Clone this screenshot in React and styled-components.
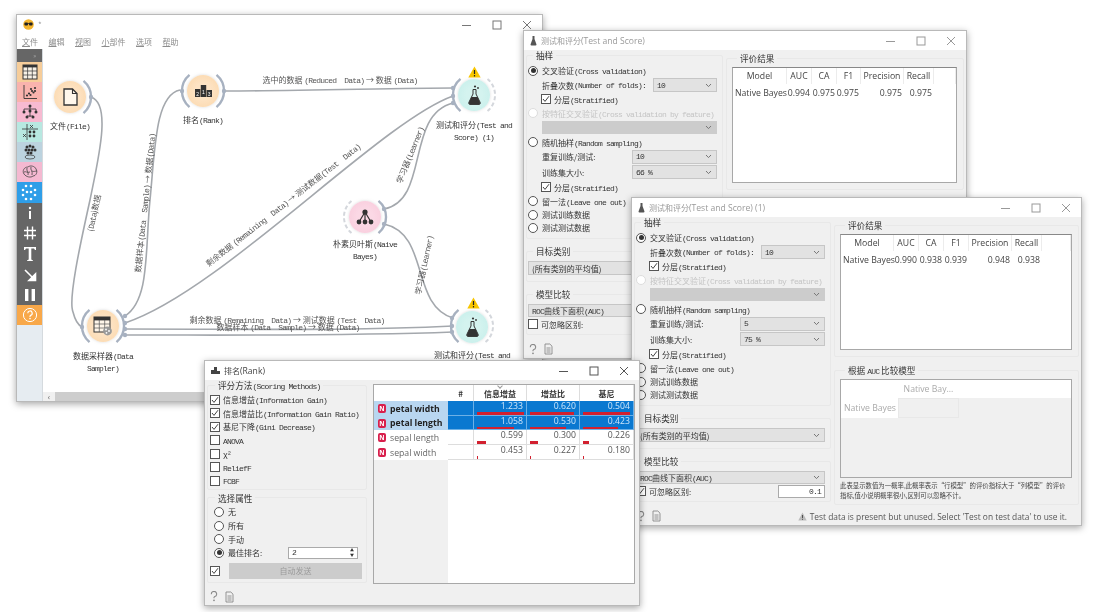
import React from 'react'
import styled, { createGlobalStyle } from 'styled-components'

const CJK = '"Noto Sans CJK SC", "Liberation Sans", sans-serif'
const SANS = '"Open Sans", "Noto Sans CJK SC", sans-serif'

const GlobalStyle = createGlobalStyle`
  html, body { margin: 0; padding: 0; background: #fff; }
  body { font-family: ${CJK}; font-size: 8px; color: #333; }
`

const Desktop = styled.div`
  position: relative;
  width: 1101px;
  height: 612px;
  overflow: hidden;
  background: #fff;
  filter: blur(0.4px);
`

const Win = styled.div`
  position: absolute;
  left: ${p => p.$x}px;
  top: ${p => p.$y}px;
  width: ${p => p.$w}px;
  height: ${p => p.$h}px;
  box-sizing: border-box;
  display: flex;
  flex-direction: column;
  background: ${p => p.$bg || '#f0f0f0'};
  border: 1px solid #b9b9b9;
  box-shadow: 0 2px 7px rgba(0, 0, 0, 0.35);
`

const TitleBar = styled.div`
  flex: 0 0 19px;
  display: flex;
  align-items: center;
  padding-left: 6px;
  background: #fff;
  color: ${p => p.$color || '#9a9a9a'};
  font-size: 8px;
`

const TitleText = styled.span`
  margin-left: 4px;
  white-space: nowrap;
`

const TitleLatin = styled.span`
  font-family: ${SANS};
  font-size: 8.6px;
`

const WinButtons = styled.div`
  margin-left: auto;
  display: flex;
`

const WinButton = styled.div`
  width: 30px;
  height: 19px;
  display: flex;
  align-items: center;
  justify-content: center;
  svg { display: block; }
`

// simsun style half width latin
const L = styled.span`
  font-family: "Liberation Mono", monospace;
  font-size: 8px;
  letter-spacing: -0.8px;
`

const Row = styled.div`
  height: ${p => p.$h || 14}px;
  margin-top: ${p => p.$top || 0}px;
  display: flex;
  align-items: center;
  padding-left: ${p => p.$indent || 0}px;
  white-space: nowrap;
  color: ${p => (p.$muted ? '#c4c4c4' : '#333')};
`

const Box = styled.span`
  flex: 0 0 10px;
  box-sizing: border-box;
  width: 10px;
  height: 10px;
  margin-right: ${p => p.$gap || 3}px;
  background: #fff;
  border: 1px solid ${p => (p.$muted ? '#ddd' : '#555')};
  border-radius: ${p => (p.$round ? '50%' : '0')};
  display: flex;
  align-items: center;
  justify-content: center;
`

const Dot = styled.span`
  width: 5px;
  height: 5px;
  border-radius: 50%;
  background: ${p => (p.$muted ? '#ccc' : '#333')};
`

const Radio = ({ on, muted, children }) => (
  <>
    <Box $round $gap={4} $muted={muted}>{on && <Dot $muted={muted} />}</Box>
    <span>{children}</span>
  </>
)

const Check = ({ on, children }) => (
  <>
    <Box>
      {on && (
        <svg width="8" height="8" viewBox="0 0 8 8">
          <path d="M1 4 L3 6.4 L7 1.2" fill="none" stroke="#444" strokeWidth="1" />
        </svg>
      )}
    </Box>
    <span>{children}</span>
  </>
)

const Combo = styled.div`
  box-sizing: border-box;
  flex: ${p => (p.$w ? `0 0 ${p.$w}px` : '1')};
  margin-left: ${p => (p.$w ? 'auto' : '0')};
  height: ${p => p.$h || 14}px;
  padding: 0 4px 0 3px;
  display: flex;
  align-items: center;
  justify-content: space-between;
  background: ${p => (p.$off ? '#cccccc' : '#e2e2e2')};
  border: 1px solid ${p => (p.$off ? '#cccccc' : '#c6c6c6')};
`

const Chevron = () => (
  <svg width="7" height="5" viewBox="0 0 7 5">
    <path d="M1 1 L3.5 3.6 L6 1" fill="none" stroke="#777" strokeWidth="1" />
  </svg>
)

const Group = styled.fieldset`
  margin: ${p => p.$top || 0}px 0 0 0;
  padding: ${p => p.$pad || '3px 5px 4px 1px'};
  min-width: 0;
  border: 1px solid #e8e8e8;
  border-radius: 2px;
`

const Legend = styled.legend`
  padding: 0 3px;
  margin-left: 5px;
  height: 10px;
  line-height: 10px;
  color: #333;
  font-size: ${p => p.$size || 8.6}px;
  white-space: nowrap;
`

const Body = styled.div`
  flex: 1;
  min-height: 0;
  display: flex;
  gap: 3px;
  padding: 0 2px;
`

const LeftPanel = styled.div`
  flex: 0 0 ${p => p.$w || 197}px;
  display: flex;
  flex-direction: column;
`

const RightPanel = styled.div`
  flex: 1;
  min-width: 0;
  padding-top: 3px;
  display: flex;
  flex-direction: column;
`

const StatusBar = styled.div`
  flex: 0 0 ${p => p.$h || 18}px;
  display: flex;
  align-items: center;
  gap: 7px;
  padding: 0 5px;
  color: #555;
  font-family: ${SANS};
  font-size: 8.4px;
  white-space: nowrap;
`

const StatusText = styled.span`
  margin-left: auto;
  display: flex;
  align-items: center;
  gap: 3px;
  margin-right: 9px;
`

const ScoreTable = styled.div`
  box-sizing: border-box;
  height: ${p => p.$h}px;
  background: #fff;
  border: 1px solid #a8a8a8;
  border-top-color: #888;
  display: grid;
  grid-template-columns: ${p => p.$cols};
  grid-template-rows: 16px 17px;
  align-content: start;
  font-family: ${SANS};
  font-size: 8.7px;
  color: #444;
`

const ScoreHead = styled.div`
  display: flex;
  align-items: center;
  justify-content: center;
  border-right: 1px solid #ececec;
  white-space: nowrap;
`

const ScoreCell = styled.div`
  display: flex;
  align-items: center;
  justify-content: ${p => (p.$name ? 'flex-start' : 'flex-end')};
  padding: ${p => (p.$name ? '0 0 0 2px' : '0 2px 0 0')};
  white-space: nowrap;
`

const CompareTable = styled.div`
  box-sizing: border-box;
  height: 99px;
  display: grid;
  grid-template-columns: 57px 61px 1fr;
  grid-template-rows: 18px 20px 1fr;
  background: #f0f0f0;
  border: 1px solid #a8a8a8;
  color: #aaa;
  font-family: ${SANS};
  font-size: 8.7px;
`

const CompareCell = styled.div`
  display: flex;
  align-items: center;
  justify-content: ${p => (p.$center ? 'center' : 'flex-start')};
  padding-left: ${p => (p.$center ? 0 : 3)}px;
  background: ${p => (p.$white ? '#fff' : '#f0f0f0')};
  border: ${p => (p.$framed ? '1px solid #e8e8e8' : 'none')};
  white-space: nowrap;
`

const Caption = styled.div`
  margin-top: 3px;
  font-size: 6.4px;
  line-height: 10px;
  color: #444;
  white-space: nowrap;
`

const Spin = styled.div`
  box-sizing: border-box;
  flex: 0 0 ${p => p.$w}px;
  margin-left: auto;
  margin-right: ${p => p.$mr || 0}px;
  height: ${p => p.$h || 13}px;
  padding: 0 3px;
  background: #fff;
  border: 1px solid #aaa;
  display: flex;
  align-items: center;
  justify-content: ${p => (p.$right ? 'flex-end' : 'space-between')};
`

const HelpIcon = () => (
  <svg width="8" height="11" viewBox="0 0 9 12">
    <path d="M1.5 3.5 A3 3 0 1 1 5 6.2 L4.5 7 V8" fill="none" stroke="#888" strokeWidth="1.2" />
    <circle cx="4.5" cy="10.3" r="1" fill="#888" />
  </svg>
)

const DocIcon = () => (
  <svg width="9" height="12" viewBox="0 0 9 12">
    <path d="M1 1 H5.8 L8 3.2 V11 H1 Z M2.5 5 H6.5 M2.5 7 H6.5 M2.5 9 H6.5" fill="none" stroke="#888" strokeWidth="0.9" />
  </svg>
)

const FlaskSmall = () => (
  <svg width="7" height="11" viewBox="0 0 7 11">
    <path d="M2.5 1 H4.5 V4 L6.5 9.5 Q6.5 10.5 5.5 10.5 H1.5 Q0.5 10.5 0.5 9.5 L2.5 4 Z" fill="#555" />
  </svg>
)

const MinIcon = ({ c }) => (
  <svg width="10" height="10" viewBox="0 0 10 10"><path d="M0 5.5 H9" stroke={c} /></svg>
)
const MaxIcon = ({ c }) => (
  <svg width="10" height="10" viewBox="0 0 10 10"><rect x="1" y="1" width="8" height="8" fill="none" stroke={c} /></svg>
)
const CloseIcon = ({ c }) => (
  <svg width="10" height="10" viewBox="0 0 10 10"><path d="M1 1 L9 9 M9 1 L1 9" stroke={c} /></svg>
)

const Controls = ({ c = '#999' }) => (
  <WinButtons>
    <WinButton><MinIcon c={c} /></WinButton>
    <WinButton><MaxIcon c={c} /></WinButton>
    <WinButton><CloseIcon c={c} /></WinButton>
  </WinButtons>
)

const HEAD = ['Model', 'AUC', 'CA', 'F1', 'Precision', 'Recall', '']

const TestScore = ({ x, y, w, title, folds, repeat, train, scores, cols, ignoreOn, compare, status }) => (
  <Win $x={x} $y={y} $w={w} $h={329}>
    <TitleBar>
      <FlaskSmall />
      <TitleText>测试和评分<TitleLatin>{title}</TitleLatin></TitleText>
      <Controls />
    </TitleBar>
    <Body>
      <LeftPanel>
        <Group>
          <Legend>抽样</Legend>
          <Row $h={15}><Radio on>交叉验证<L>(Cross validation)</L></Radio></Row>
          <Row $indent={14}>折叠次数<L>(Number of folds):</L><Combo $w={64}>{folds}<Chevron /></Combo></Row>
          <Row $indent={13}><Check on>分层<L>(Stratified)</L></Check></Row>
          <Row $muted><Radio muted>按特征交叉验证<L>(Cross validation by feature)</L></Radio></Row>
          <Row $h={15} $indent={14}><Combo $off $h={13}><span /><Chevron /></Combo></Row>
          <Row><Radio>随机抽样<L>(Random sampling)</L></Radio></Row>
          <Row $h={15} $indent={14}>重复训练/测试:<Combo $w={85}><L>{repeat}</L><Chevron /></Combo></Row>
          <Row $h={16} $indent={14}>训练集大小:<Combo $w={85}><L>{train}</L><Chevron /></Combo></Row>
          <Row $indent={13}><Check on>分层<L>(Stratified)</L></Check></Row>
          <Row><Radio>留一法<L>(Leave one out)</L></Radio></Row>
          <Row $h={13}><Radio>测试训练数据</Radio></Row>
          <Row $h={13}><Radio>测试测试数据</Radio></Row>
        </Group>
        <Group $top={7} $pad="5px 5px 6px 1px">
          <Legend>目标类别</Legend>
          <Row><Combo>(所有类别的平均值)<Chevron /></Combo></Row>
        </Group>
        <Group $top={7} $pad="4px 5px 3px 1px">
          <Legend>模型比较</Legend>
          <Row><Combo $h={13}><span><L>ROC</L>曲线下面积<L>(AUC)</L></span><Chevron /></Combo></Row>
          <Row>
            <Check on={ignoreOn}>可忽略区别:</Check>
            {ignoreOn && <Spin $w={47} $right><L>0.1</L></Spin>}
          </Row>
        </Group>
      </LeftPanel>
      <RightPanel>
        <Group $pad="4px 6px 6px 5px">
          <Legend>评价结果</Legend>
          <ScoreTable $h={116} $cols={cols}>
            {HEAD.map(h => <ScoreHead key={h}>{h}</ScoreHead>)}
            <ScoreCell $name>Native Bayes</ScoreCell>
            {scores.map((s, i) => <ScoreCell key={i}>{s}</ScoreCell>)}
          </ScoreTable>
        </Group>
        {compare && (
          <Group $top={8} $pad="4px 6px 3px 5px">
            <Legend>根据 <L>AUC</L> 比较模型</Legend>
            <CompareTable>
              <CompareCell $white />
              <CompareCell $white $center>Native Bay...</CompareCell>
              <CompareCell $white />
              <CompareCell $white>Native Bayes</CompareCell>
              <CompareCell $framed />
            </CompareTable>
            <Caption>
              此表显示数值为一概率,此概率表示“行模型”的评价指标大于“列模型”的评价<br />
              指标,值小说明概率很小,区别可以忽略不计。
            </Caption>
          </Group>
        )}
      </RightPanel>
    </Body>
    <StatusBar>
      <HelpIcon />
      <DocIcon />
      {status && (
        <StatusText>
          <svg width="9" height="9" viewBox="0 0 9 9">
            <path d="M4.5 0.5 L8.7 8.5 H0.3 Z" fill="#bbb" />
            <path d="M4.5 3 V6 M4.5 6.8 V7.8" stroke="#444" strokeWidth="0.9" />
          </svg>
          {status}
        </StatusText>
      )}
    </StatusBar>
  </Win>
)

/* ---- main canvas window ---- */

const MenuBar = styled.div`
  flex: 0 0 15px;
  display: flex;
  align-items: center;
  gap: 10.5px;
  padding-left: 5px;
  background: #fff;
  color: #8d8d8d;
`

const MenuItem = styled.span`
  display: inline-block;
  &::first-letter { text-decoration: underline; }
`

const Main = styled.div`
  flex: 1;
  min-height: 0;
  display: flex;
  background: #fff;
`

const ToolBar = styled.div`
  flex: 0 0 25px;
  display: flex;
  flex-direction: column;
  background: #e6ecf1;
  border-right: 1px solid #d5dade;
`

const Tool = styled.div`
  flex: 0 0 ${p => p.$h || 20}px;
  position: relative;
  display: flex;
  align-items: center;
  justify-content: ${p => (p.$end ? 'flex-end' : 'center')};
  padding-right: ${p => (p.$end ? 6 : 0)}px;
  background: ${p => p.$bg};
  color: #aaa;
  font-size: 6px;
`

const CanvasColumn = styled.div`
  flex: 1;
  min-width: 0;
  display: flex;
  flex-direction: column;
`

const Canvas = styled.div`
  position: relative;
  flex: 1;
  overflow: hidden;
`

const Links = styled.svg`
  position: absolute;
  inset: 0;
`

const ScrollBar = styled.div`
  flex: 0 0 9px;
  display: flex;
  align-items: center;
  background: #f0f0f0;
  color: #555;
  font-size: 8px;
`

const ScrollArrow = styled.span`
  flex: 0 0 12px;
  text-align: center;
  line-height: 9px;
`

const ScrollThumb = styled.div`
  flex: 1;
  height: 9px;
  background: #cdcdcd;
`

const WidgetNode = styled.div`
  position: absolute;
  left: ${p => p.$x - 43 - 60}px;
  top: ${p => p.$y - 49 - 16}px;
  width: 120px;
  display: flex;
  flex-direction: column;
  align-items: center;
`

const Disc = styled.div`
  width: 32px;
  height: 32px;
  border-radius: 50%;
  background: radial-gradient(circle, ${p => p.$light} 35%, ${p => p.$tone} 100%);
  box-shadow: 0 0 3px rgba(180, 180, 180, 0.5);
  display: flex;
  align-items: center;
  justify-content: center;
`

const NodeLabel = styled.div`
  margin-top: ${p => p.$gap}px;
  line-height: 11px;
  text-align: center;
  white-space: nowrap;
  color: #333;
`

const LinkLabel = styled.div`
  position: absolute;
  left: ${p => p.$x - 43}px;
  top: ${p => p.$y - 49}px;
  transform: translate(-50%, -50%) rotate(${p => p.$r || 0}deg);
  white-space: pre;
  color: #555;
  line-height: 7px;
`

const Warn = () => (
  <svg width="13" height="12" viewBox="0 0 13 12">
    <path d="M6.5 0.5 L12.7 11.5 H0.3 Z" fill="#f8c600" />
    <path d="M6.5 4 V8 M6.5 9 V10.4" stroke="#222" strokeWidth="1.2" />
  </svg>
)

const WarnSlot = styled.div`
  position: absolute;
  left: ${p => p.$x - 43 - 6.5}px;
  top: ${p => p.$y - 49 - 6}px;
`

const arc = (cx, cy, r, a0, a1) => {
  const rad = d => (d * Math.PI) / 180
  const p = a => `${(cx + r * Math.cos(rad(a))).toFixed(1)} ${(cy + r * Math.sin(rad(a))).toFixed(1)}`
  return `M${p(a0)} A${r} ${r} 0 0 1 ${p(a1)}`
}

const LINK_PATHS = [
  'M91 97 C112 104 98 160 90 200 C80 245 68 300 73 312 C75 320 78 325 82 327',
  'M125 316 C150 300 145 250 150 200 C155 150 155 95 180 90',
  'M224 91 C300 91 400 88 453 88',
  'M125 323 C220 292 380 122 453 96',
  'M384 209 C430 200 405 115 453 103',
  'M384 224 C430 234 410 305 453 318',
  'M125 329 C250 329 350 331 453 326',
  'M125 335 C250 335 350 336 453 332',
]

const ARCS = [
  [70, 97, 21, -50, 50],
  [203, 91, 21, -50, 50],
  [203, 91, 21, 130, 230],
  [474, 95, 21, 130, 230],
  [365, 217, 21, -50, 50],
  [103, 326, 21, -50, 50],
  [103, 326, 21, 130, 230],
  [472, 326, 21, 130, 230],
]

const DASHED = [
  [474, 95, 21, -50, 50],
  [472, 326, 21, -50, 50],
  [365, 217, 21, 130, 230],
]

const ANCHORS = [
  [91, 97], [182, 91], [224, 91], [453, 88], [453, 96], [453, 103], [384, 209], [384, 224],
  [82, 327], [125, 316], [125, 323], [125, 329], [125, 335], [452, 318], [452, 326], [452, 332],
]

const FileGlyph = () => (
  <svg width="15" height="18" viewBox="0 0 15 18">
    <path d="M1 1 H9.5 L14 5.5 V17 H1 Z" fill="#fff7ec" stroke="#333" strokeWidth="1.3" />
    <path d="M9.5 1 V5.5 H14" fill="none" stroke="#333" strokeWidth="1.1" />
  </svg>
)

const RankGlyph = () => (
  <svg width="17" height="12" viewBox="0 0 17 12">
    <rect x="0" y="4" width="5.4" height="8" fill="#333" />
    <rect x="5.8" y="0" width="5.4" height="12" fill="#333" />
    <rect x="11.6" y="5" width="5.4" height="7" fill="#333" />
    <text x="1.2" y="10.6" fontSize="5" fill="#fff" fontFamily="Liberation Sans">2</text>
    <text x="7" y="9.4" fontSize="5" fill="#fff" fontFamily="Liberation Sans">1</text>
    <text x="12.8" y="10.6" fontSize="5" fill="#fff" fontFamily="Liberation Sans">3</text>
  </svg>
)

const FlaskGlyph = () => (
  <svg width="13" height="20" viewBox="0 0 13 20">
    <circle cx="7" cy="1.5" r="1.1" fill="#333" />
    <circle cx="10" cy="3" r="0.9" fill="#333" />
    <path d="M5 4.5 H8 V9 L12.2 17.5 Q12.6 19.4 11 19.4 H2 Q0.4 19.4 0.8 17.5 L5 9 Z" fill="none" stroke="#333" strokeWidth="1" />
    <path d="M3.4 12 H9.6 L12 17.6 Q12.4 19.4 11 19.4 H2 Q0.6 19.4 1 17.6 Z" fill="#333" />
  </svg>
)

const BayesGlyph = () => (
  <svg width="18" height="16" viewBox="0 0 18 16">
    <path d="M9 3 L3 13 M9 3 L15 13 M9 3 V13" stroke="#333" strokeWidth="1.2" />
    <circle cx="9" cy="3" r="2.6" fill="#333" />
    <circle cx="3" cy="13" r="2.4" fill="#333" />
    <circle cx="9" cy="13" r="2.4" fill="#333" />
    <circle cx="15" cy="13" r="2.4" fill="#333" />
  </svg>
)

const SamplerGlyph = () => (
  <svg width="20" height="20" viewBox="0 0 20 20">
    <rect x="1" y="1" width="16" height="15" fill="#fff6ea" stroke="#333" />
    <rect x="1" y="1" width="16" height="3.4" fill="#333" />
    <path d="M1 8 H17 M1 12 H17 M6.3 4 V16 M11.7 4 V16" stroke="#555" strokeWidth="0.7" />
    <circle cx="14.5" cy="15" r="4.4" fill="#999" />
    <circle cx="13" cy="13.5" r="0.9" fill="#fff" />
    <circle cx="16" cy="15" r="0.9" fill="#fff" />
    <circle cx="13.5" cy="16.8" r="0.9" fill="#fff" />
  </svg>
)

const Dots = ({ pts, r = 1.1, c = '#333' }) => pts.map(([x, y], i) => <circle key={i} cx={x} cy={y} r={r} fill={c} />)

const ToolIcon = ({ children }) => <svg width="18" height="18" viewBox="0 0 18 18">{children}</svg>

const Orange = () => (
  <svg width="11" height="11" viewBox="0 0 11 11">
    <circle cx="5.5" cy="5.5" r="5.3" fill="#f4b42c" />
    <rect x="1.4" y="3.6" width="3.6" height="3" rx="1" fill="#222" />
    <rect x="6" y="3.6" width="3.6" height="3" rx="1" fill="#222" />
    <rect x="4.6" y="4.2" width="2" height="0.8" fill="#222" />
  </svg>
)

const CanvasWindow = () => (
  <Win $x={16} $y={14} $w={527} $h={388} $bg="#fff">
    <TitleBar>
      <Orange />
      <TitleText>*</TitleText>
      <Controls c="#777" />
    </TitleBar>
    <MenuBar>
      {['文件', '编辑', '视图', '小部件', '选项', '帮助'].map(m => <MenuItem key={m}>{m}</MenuItem>)}
    </MenuBar>
    <Main>
      <ToolBar>
        <Tool $h={13} $bg="#666" $end><span>»</span></Tool>
        <Tool $bg="#f6cd9a">
          <ToolIcon>
            <rect x="2" y="2" width="14" height="14" fill="#f7f1e6" stroke="#333" />
            <rect x="2" y="2" width="14" height="2.4" fill="#333" />
            <path d="M2 8 H16 M2 12 H16 M6.6 4 V16 M11.3 4 V16" stroke="#333" strokeWidth="0.7" />
          </ToolIcon>
        </Tool>
        <Tool $bg="#f9b3ad">
          <ToolIcon>
            <path d="M3 2 V15.5 H16" fill="none" stroke="#333" strokeWidth="0.9" />
            <Dots pts={[[6, 12.5], [8, 10.5], [9.5, 12], [11, 8], [12.5, 9.5], [14, 5], [10, 6], [14, 8]]} />
          </ToolIcon>
        </Tool>
        <Tool $bg="#f7bad1">
          <ToolIcon>
            <path d="M3 6 H15 M9 3 V14 M3 6 V9 M15 6 V9 M6 13 H12" fill="none" stroke="#333" strokeWidth="0.8" />
            <Dots r={1.5} pts={[[9, 3], [9, 8], [3, 9], [15, 9], [6, 14], [12, 14]]} />
          </ToolIcon>
        </Tool>
        <Tool $bg="#b8e8e1">
          <ToolIcon>
            <path d="M6 1 V17 M1 6 H17" stroke="#333" strokeWidth="0.8" />
            <Dots r={1.4} pts={[[9, 9], [13, 9], [9, 13], [13, 13]]} />
            <path d="M2 11 L5 14 M5 11 L2 14 M9 2 L12 5 M12 2 L9 5" stroke="#333" strokeWidth="0.8" />
          </ToolIcon>
        </Tool>
        <Tool $bg="#bcd3df">
          <ToolIcon>
            <Dots r={1.5} pts={[[6, 4], [9, 3], [12, 4], [5, 7], [8, 7], [11, 7], [14, 7], [7, 10], [10, 10]]} />
            <ellipse cx="9" cy="14" rx="5" ry="2" fill="none" stroke="#444" strokeWidth="0.8" />
          </ToolIcon>
        </Tool>
        <Tool $bg="#f4b9d1">
          <ToolIcon>
            <path d="M3 11 C1 8 3 4 7 4 C9 2 14 3 15 6 C17 9 15 13 12 13 C10 15 5 14 3 11 Z M6 5 C5 8 8 9 7 12 M10 4 C9 7 12 8 11 12 M3 9 C5 8 6 10 9 9 M11 8 C13 9 14 8 16 8" fill="none" stroke="#444" strokeWidth="0.8" />
          </ToolIcon>
        </Tool>
        <Tool $h={21} $bg="#2f9ee8">
          <ToolIcon>
            <Dots c="#fff" r={1.3} pts={[[5, 2], [10, 2], [2, 6], [14, 6], [6, 8], [10, 8], [2, 11], [14, 11], [5, 15], [10, 15]]} />
          </ToolIcon>
        </Tool>
        <Tool $bg="#666">
          <ToolIcon>
            <circle cx="9" cy="4" r="1.2" fill="#fff" />
            <rect x="8" y="7" width="2" height="8" fill="#fff" />
          </ToolIcon>
        </Tool>
        <Tool $bg="#666">
          <ToolIcon>
            <path d="M3 6.5 H15 M3 11.5 H15 M6.5 2.5 V15.5 M11.5 2.5 V15.5" stroke="#fff" strokeWidth="1.4" />
          </ToolIcon>
        </Tool>
        <Tool $h={21} $bg="#666">
          <ToolIcon>
            <path d="M3 2 H15 V5 H14 L13 3.6 H10.3 V14.6 L12 15.4 V16 H6 V15.4 L7.7 14.6 V3.6 H5 L4 5 H3 Z" fill="#fff" />
          </ToolIcon>
        </Tool>
        <Tool $h={21} $bg="#666">
          <ToolIcon>
            <path d="M4 4 L13 13 M14.5 8 V14.5 H8 Z" fill="#fff" stroke="#fff" strokeWidth="1.6" />
          </ToolIcon>
        </Tool>
        <Tool $bg="#666">
          <ToolIcon>
            <rect x="4" y="3" width="3.4" height="12" fill="#fff" />
            <rect x="10.6" y="3" width="3.4" height="12" fill="#fff" />
          </ToolIcon>
        </Tool>
        <Tool $bg="#f8a84a">
          <ToolIcon>
            <circle cx="9" cy="9" r="6.6" fill="none" stroke="#fff" strokeWidth="1" />
            <path d="M6.8 7.2 A2.2 2.2 0 1 1 9.6 9.3 Q9 9.6 9 11" fill="none" stroke="#fff" strokeWidth="1.2" />
            <circle cx="9" cy="12.6" r="0.8" fill="#fff" />
          </ToolIcon>
        </Tool>
      </ToolBar>
      <CanvasColumn>
        <Canvas>
          <Links width="500" height="345" viewBox="43 49 500 345">
            {LINK_PATHS.map((d, i) => <path key={i} d={d} fill="none" stroke="#a4a8ad" strokeWidth="1.6" />)}
            {ARCS.map((a, i) => <path key={i} d={arc(...a)} fill="none" stroke="#a7b1c0" strokeWidth="2.4" />)}
            {DASHED.map((a, i) => <path key={i} d={arc(...a)} fill="none" stroke="#d4d7dc" strokeWidth="2" strokeDasharray="4 2.5" />)}
            {ANCHORS.map(([x, y], i) => <circle key={i} cx={x} cy={y} r="2.2" fill="#a7b1c0" />)}
          </Links>
          <WidgetNode $x={70} $y={97}>
            <Disc $light="#fde3c4" $tone="#fbd6a8"><FileGlyph /></Disc>
            <NodeLabel $gap={7}>文件<L>(File)</L></NodeLabel>
          </WidgetNode>
          <WidgetNode $x={203} $y={91}>
            <Disc $light="#fde3c4" $tone="#fbd6a8"><RankGlyph /></Disc>
            <NodeLabel $gap={7}>排名<L>(Rank)</L></NodeLabel>
          </WidgetNode>
          <WidgetNode $x={474} $y={95}>
            <Disc $light="#d4f3ef" $tone="#c4eeea"><FlaskGlyph /></Disc>
            <NodeLabel $gap={8}>测试和评分<L>(Test and</L><br /><L>Score) (1)</L></NodeLabel>
          </WidgetNode>
          <WarnSlot $x={474} $y={72}><Warn /></WarnSlot>
          <WidgetNode $x={365} $y={217}>
            <Disc $light="#fbd8e5" $tone="#f8c9da"><BayesGlyph /></Disc>
            <NodeLabel $gap={5}>朴素贝叶斯<L>(Naive</L><br /><L>Bayes)</L></NodeLabel>
          </WidgetNode>
          <WidgetNode $x={103} $y={326}>
            <Disc $light="#fde3c4" $tone="#fbd6a8"><SamplerGlyph /></Disc>
            <NodeLabel $gap={8}>数据采样器<L>(Data</L><br /><L>Sampler)</L></NodeLabel>
          </WidgetNode>
          <WidgetNode $x={472} $y={327}>
            <Disc $light="#d4f3ef" $tone="#c4eeea"><FlaskGlyph /></Disc>
            <NodeLabel $gap={6}>测试和评分<L>(Test and</L></NodeLabel>
          </WidgetNode>
          <WarnSlot $x={473} $y={303}><Warn /></WarnSlot>
          <LinkLabel $x={340} $y={80}>选中的数据 <L>(Reduced  Data)</L> → 数据 <L>(Data)</L></LinkLabel>
          <LinkLabel $x={94} $y={213} $r={-78}>(<L>Data</L>)数据</LinkLabel>
          <LinkLabel $x={145} $y={203} $r={-84}>数据样本<L>(Data  Sample)</L> → 数据<L>(Data)</L></LinkLabel>
          <LinkLabel $x={283} $y={205} $r={-38}>剩余数据 <L>(Remaining  Data)</L> → 测试数据<L>(Test  Data)</L></LinkLabel>
          <LinkLabel $x={410} $y={155} $r={-68}>学习器<L>(Learner)</L></LinkLabel>
          <LinkLabel $x={424} $y={265} $r={-78}>学习器<L>(Learner)</L></LinkLabel>
          <LinkLabel $x={287} $y={320}>剩余数据 <L>(Remaining  Data)</L> → 测试数据 <L>(Test  Data)</L></LinkLabel>
          <LinkLabel $x={288} $y={327}>数据样本 <L>(Data  Sample)</L> → 数据 <L>(Data)</L></LinkLabel>
        </Canvas>
        <ScrollBar>
          <ScrollArrow>‹</ScrollArrow>
          <ScrollThumb />
        </ScrollBar>
      </CanvasColumn>
    </Main>
  </Win>
)

/* ---- rank window ---- */

const RankTable = styled.div`
  flex: 0 0 262px;
  box-sizing: border-box;
  height: 200px;
  margin: 4px 0 0 3px;
  background: #fff;
  border: 1px solid #a8a8a8;
  display: grid;
  grid-template-columns: 74px 26px 53px 53px 1fr;
  grid-template-rows: 16px 15px 14px 15px 15px 1fr;
  font-family: ${SANS};
  font-size: 8.7px;
  color: #444;
`

const RankHead = styled.div`
  position: relative;
  display: flex;
  align-items: center;
  justify-content: center;
  border-right: 1px solid #ddd;
  font-family: ${CJK};
  font-size: 8px;
  font-weight: 700;
  color: #333;
  ${p => p.$sorted && `
    &::before {
      content: '';
      position: absolute;
      top: -1px;
      left: 50%;
      width: 3px;
      height: 3px;
      margin-left: -2px;
      border-right: 1px solid #999;
      border-bottom: 1px solid #999;
      transform: rotate(45deg);
    }
  `}
`

const AttrCell = styled.div`
  display: flex;
  align-items: center;
  gap: 4px;
  padding-left: 4px;
  background: ${p => (p.$sel ? '#b8d6f0' : '#fff')};
  color: ${p => (p.$sel ? '#222' : '#666')};
  font-weight: ${p => (p.$sel ? 700 : 400)};
  white-space: nowrap;
`

const AttrBadge = styled.span`
  flex: 0 0 8px;
  height: 9px;
  border-radius: 2px;
  background: #d81f4c;
  color: #fff;
  font-size: 6.5px;
  font-weight: 700;
  line-height: 9px;
  text-align: center;
`

const ValueCell = styled.div`
  box-sizing: border-box;
  padding: 0 3px;
  display: flex;
  flex-direction: column;
  align-items: stretch;
  background: ${p => (p.$sel ? '#0a78d0' : '#fff')};
  color: ${p => (p.$sel ? '#cfe6fa' : '#555')};
  border-right: 1px solid ${p => (p.$sel ? '#6db0e6' : '#ddd')};
  border-bottom: 1px solid ${p => (p.$sel ? '#6db0e6' : '#ddd')};
`

const ValueText = styled.span`
  text-align: right;
  line-height: 11px;
  height: 10.5px;
`

const ValueBar = styled.span`
  display: block;
  height: 3px;
  background: #d2202f;
`

const RankFiller = styled.div`
  background: ${p => (p.$gray ? '#f0f0f0' : '#fff')};
  grid-column: ${p => p.$span || 'auto'};
`

const SendButton = styled.div`
  flex: 1;
  height: 16px;
  margin-left: 6px;
  margin-right: 1px;
  background: #cccccc;
  color: #9a9a9a;
  display: flex;
  align-items: center;
  justify-content: center;
`

const SpinArrows = styled.span`
  display: flex;
  flex-direction: column;
  gap: 1px;
  color: #333;
  font-size: 4px;
  line-height: 4px;
`

const RANK_ROWS = [
  { name: 'petal width', sel: true, cells: [['1.233', 47], ['0.620', 44], ['0.504', 47]] },
  { name: 'petal length', sel: true, cells: [['1.058', 37], ['0.530', 36], ['0.423', 35]] },
  { name: 'sepal length', cells: [['0.599', 9], ['0.300', 8], ['0.226', 6]] },
  { name: 'sepal width', cells: [['0.453', 1], ['0.227', 1], ['0.180', 1]] },
]

const SCORING = [
  ['信息增益', '(Information Gain)', true],
  ['信息增益比', '(Information Gain Ratio)', true],
  ['基尼下降', '(Gini Decrease)', true],
  ['', 'ANOVA'],
  ['', 'χ²'],
  ['', 'ReliefF'],
  ['', 'FCBF'],
]

const RankWindow = () => (
  <Win $x={204} $y={360} $w={436} $h={246}>
    <TitleBar $color="#444">
      <svg width="9" height="7" viewBox="0 0 9 7">
        <rect x="0" y="3" width="3" height="4" fill="#444" />
        <rect x="3" y="0" width="3" height="7" fill="#444" />
        <rect x="6" y="4" width="3" height="3" fill="#444" />
      </svg>
      <TitleText>排名<TitleLatin>(Rank)</TitleLatin></TitleText>
      <Controls c="#555" />
    </TitleBar>
    <Body>
      <LeftPanel $w={160}>
        <Group $pad="3px 3px 1px 2px">
          <Legend>评分方法<L>(Scoring Methods)</L></Legend>
          {SCORING.map(([zh, en, on]) => (
            <Row key={en} $h={13.5}><Check on={on}>{zh}<L>{en}</L></Check></Row>
          ))}
        </Group>
        <Group $top={3} $pad="2px 3px 3px 2px">
          <Legend>选择属性</Legend>
          <Row $indent={4}><Radio>无</Radio></Row>
          <Row $indent={4}><Radio>所有</Radio></Row>
          <Row $h={13} $indent={4}><Radio>手动</Radio></Row>
          <Row $indent={4}>
            <Radio on>最佳排名:</Radio>
            <Spin $w={70} $h={12} $mr={5}><L>2</L><SpinArrows><span>▲</span><span>▼</span></SpinArrows></Spin>
          </Row>
          <Row $h={16} $top={3}>
            <Check on />
            <SendButton>自动发送</SendButton>
          </Row>
        </Group>
      </LeftPanel>
      <RankTable>
        <RankFiller />
        <RankHead>#</RankHead>
        <RankHead $sorted>信息增益</RankHead>
        <RankHead>增益比</RankHead>
        <RankHead>基尼</RankHead>
        {RANK_ROWS.map(r => (
          <React.Fragment key={r.name}>
            <AttrCell $sel={r.sel}><AttrBadge>N</AttrBadge>{r.name}</AttrCell>
            <ValueCell $sel={r.sel} />
            {r.cells.map(([v, w]) => (
              <ValueCell key={v} $sel={r.sel}>
                <ValueText>{v}</ValueText>
                <ValueBar style={{ width: w }} />
              </ValueCell>
            ))}
          </React.Fragment>
        ))}
        <RankFiller $gray />
        <RankFiller $span="2 / -1" />
      </RankTable>
    </Body>
    <StatusBar $h={17}>
      <HelpIcon />
      <DocIcon />
    </StatusBar>
  </Win>
)

export default function App() {
  return (
    <Desktop>
      <GlobalStyle />
      <CanvasWindow />
      <TestScore
        x={523}
        y={30}
        w={444}
        title="(Test and Score)"
        folds={<L>10</L>}
        repeat="10"
        train="66 %"
        cols="54px 25px 25px 24px 43px 30px 1fr"
        scores={['0.994', '0.975', '0.975', '0.975', '0.975']}
      />
      <TestScore
        x={631}
        y={197}
        w={451}
        title="(Test and Score) (1)"
        folds={<L>10</L>}
        repeat="5"
        train="75 %"
        cols="53px 25px 25px 25px 43px 30px 1fr"
        scores={['0.990', '0.938', '0.939', '0.948', '0.938']}
        ignoreOn
        compare
        status="Test data is present but unused. Select 'Test on test data' to use it."
      />
      <RankWindow />
    </Desktop>
  )
}
